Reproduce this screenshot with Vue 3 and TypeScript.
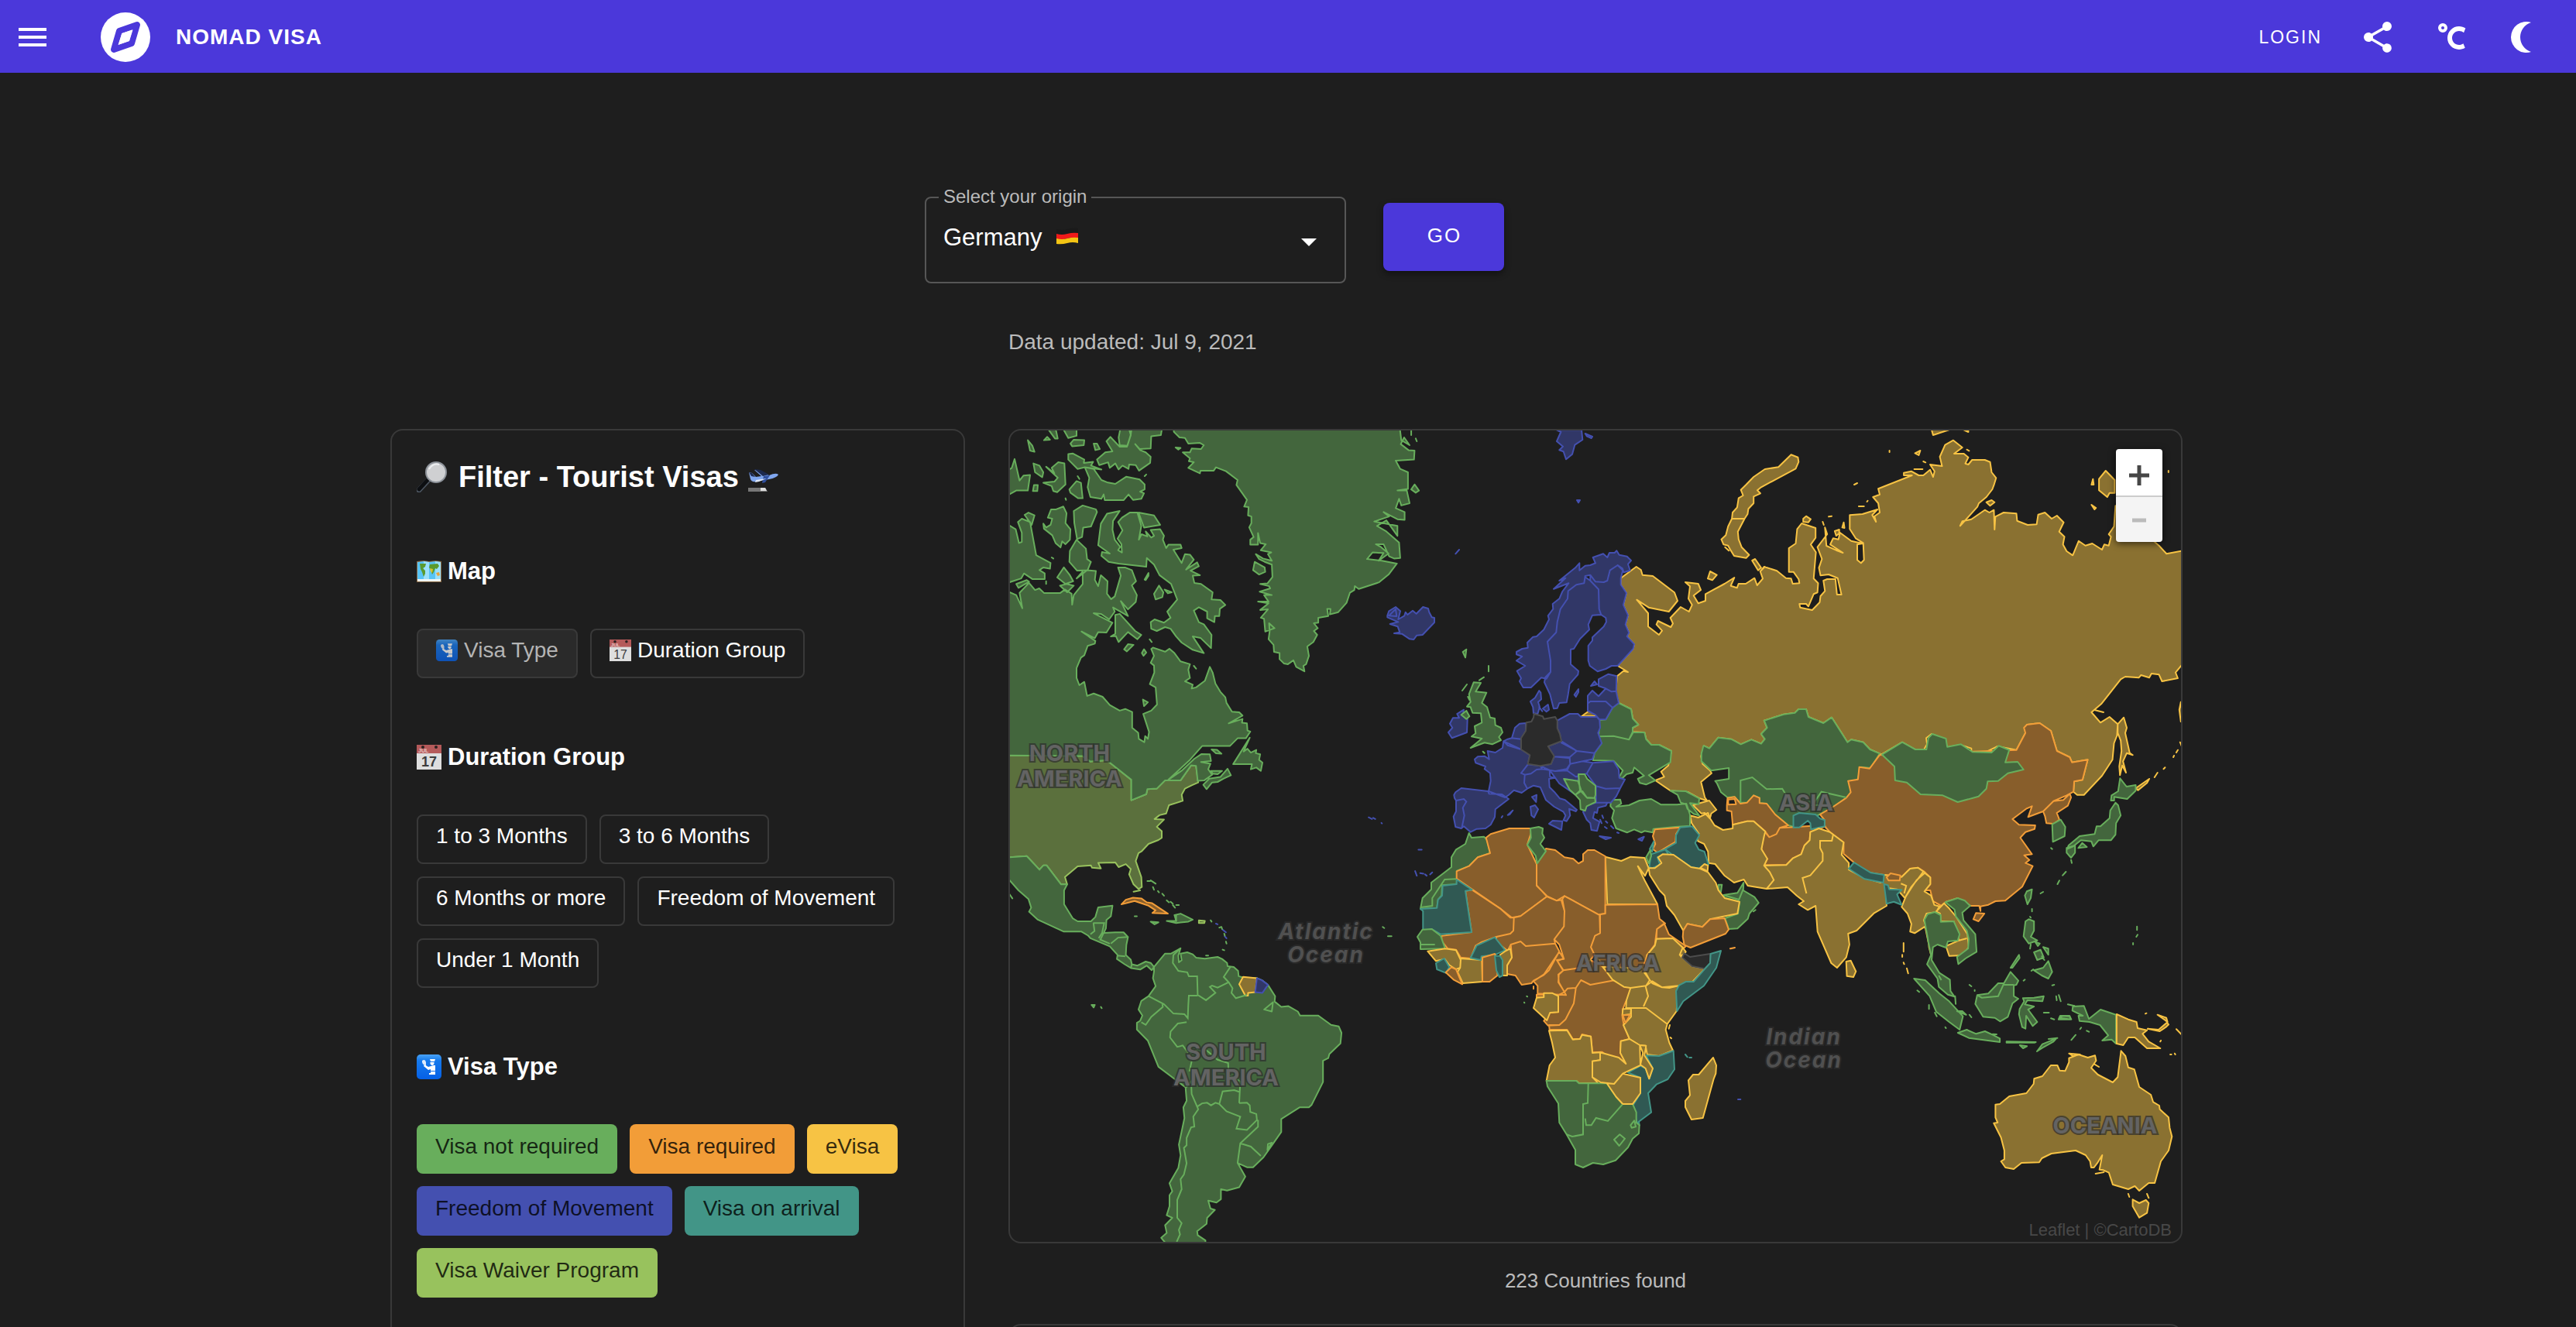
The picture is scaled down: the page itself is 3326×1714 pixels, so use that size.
<script setup lang="ts">
import { ref } from 'vue'

type Status = 'free' | 'required' | 'evisa' | 'movement' | 'arrival' | 'waiver' | 'none'

interface Area {
  status: Status
  rings: string
}

interface Label {
  x: number
  y: number
  lines: string[]
  ocean?: boolean
}

/* Coastlines are digitised on seven overlapping sheets: [origin x, origin y, scale x, scale y]. */
const sheets: Record<string, [number, number, number, number]> = {
  A: [1290, 540, 2.8, 2.8],
  B: [1290, 1040, 2.8, 2.3264],
  C: [1780, 640, 3, 3],
  D: [1780, 1020, 3, 3],
  E: [2080, 540, 2.0632, 3],
  F: [2180, 940, 2.3758, 3],
  G: [2280, 1280, 2.8, 3],
}

function trace(source: string, closed: boolean): string {
  let sheet = sheets.A
  return source
    .split('/')
    .map((ring) => {
      const points: string[] = []
      for (const token of ring.trim().split(/\s+/)) {
        if (sheets[token]) {
          sheet = sheets[token]
          continue
        }
        const [x, y] = token.split(',').map(Number)
        points.push(`${(sheet[0] + x / sheet[2]).toFixed(1)} ${(sheet[1] + y / sheet[3]).toFixed(1)}`)
      }
      return `M${points.join('L')}${closed ? 'Z' : ''}`
    })
    .join('')
}

const areas: Area[] = [
  // Russia
  { status: 'evisa', rings: `C 938,320 998,276 1016,288 1022,308 1062,312 1146,376 1158,408 1124,450 1046,434 1000,404 1044,456 1044,508 1086,540 1098,524 1076,500 1082,486 1132,510 1140,496 1130,474 1170,432 1202,450 1214,424 1200,400 1206,352 1188,336 1238,342 1248,366 1220,388 1238,418 1266,408 1266,382 1340,342 1378,318 1364,350 1388,358 1394,342 1422,342 1456,320 1466,348 1488,322 1478,294 1496,276
    E 400,590 408,576 442,592 466,620 480,622 484,642 502,640 500,624 486,596 474,596 474,504 492,486 496,430 508,408 545,426 545,464 532,490 546,520 540,622 552,640 550,676 540,682 526,730 520,720 502,720 504,734 536,744 556,714 558,690 570,670 566,630 576,624 598,624 602,684 614,684 604,620 580,606 558,610 554,580 562,546 550,500 576,450 570,424 574,495 600,512 618,522 584,490 592,466 606,470 610,444 640,476 670,486 656,490 656,550 666,562 674,550 672,484 652,466 636,430 636,376 670,372 710,354 696,376 706,402 702,380 716,366 712,330 698,306 716,296 712,274 802,222 780,222 780,212 800,206 820,222 832,222 850,200 858,228 862,206 850,180 882,186 876,150 890,104 912,86 936,114 914,138 940,138 952,152 944,176 952,180 962,162 996,162 1010,170 1014,210 1026,232 1020,260 1016,276 1000,306 980,330 976,344 930,418 936,400 960,392 996,356 1008,366 1020,356 1022,432 1024,382 1046,366 1080,370 1082,398 1110,414 1134,412 1138,374 1156,366 1174,390 1188,378 1206,404 1194,440 1208,460 1204,490 1214,516 1230,532 1246,476 1264,494 1282,486 1308,510 1314,490 1326,494 1332,460 1326,450 1340,420 1344,340 1400,420 1460,494 1480,526 1524,514 1524,950 1504,986 1510,1008 1468,1020 1460,994 1440,990 1434,1006 1412,996 1406,1006 1370,1002 1358,1012 1306,1108 1280,1140 1304,1180 1328,1158 1350,1186 1348,1230 1340,1260 1336,1324 1308,1386 1260,1460 1242,1460 1232,1448 1234,1408 1256,1402 1270,1324 1228,1334 1222,1314 1188,1290 1172,1212 1142,1182 1108,1188 1104,1220 1080,1286 1030,1272 990,1300 960,1296 960,1280 930,1266 896,1276 888,1244 854,1224 840,1240 842,1264 834,1284 810,1284 776,1256 720,1304 716,1300 690,1284 672,1256 640,1246 630,1256 588,1160 566,1182 526,1158 520,1128 500,1128 490,1142 460,1148 408,1172 416,1200 400,1224 410,1244 400,1262 374,1246 346,1264 320,1244 286,1238 262,1280 248,1270 240,1310 244,1340 264,1366 268,1376 240,1410 250,1470 262,1495
    C 1280,1186 1240,1172 1200,1150 1130,1144 1072,1104 1106,1090 1094,1070 1122,1046 1134,990 1086,966 1056,966 1036,944 1030,918 984,916 984,900 1006,888 984,864 978,828 930,804 918,760 924,700 948,680 966,684 926,660 986,594 990,576 962,546 970,532 956,500 966,464 948,424 960,378 938,346
    / C 786,856 816,834 840,838 840,854
    / E 480,142 498,152 500,170 492,196 400,268 390,280 398,292 380,304 380,330 366,352 364,372 356,390 338,440 340,470 348,500 368,530 360,542 328,534 318,510 312,494 300,490 294,470 306,454 312,420 322,390 324,366 336,346 340,310 352,300 346,278 360,258 380,228 410,198 446,190
    / 258,622 264,594 282,608 270,628 / 376,552 384,546 400,580 392,590 / 512,390 520,380 532,392 526,404 512,402 / 1000,326 1014,318 1022,326 1010,340 / 854,44 900,46 858,66 / 940,46 952,46 952,54 / 1300,236 1318,204 1342,240 1342,290 1328,290 1322,306 1300,280 / 1280,258 1284,236 1286,258 / 1280,336 1292,348 1288,354 / 810,136 824,126 820,144 / 648,258 656,252 / 808,198 830,198 / 596,438 608,432 608,446 600,456 / 616,424 620,404 622,426
    / 564,402 567,414 / 948,122 954,127 / 832,168 838,172 / 580,382 588,380 / 660,342 674,342 / 684,320 682,324 / 742,126 742,132 / 1485,204 1485,210
    / 1350,1186 1366,1160 1374,1200 1370,1220 1382,1298 1390,1306 1374,1298 1364,1330 1372,1374 1362,1346 1356,1384 1354,1350 1360,1290 1358,1250 1350,1220 / 1518,1100 1514,1130 1518,1176 1524,1176 / 1516,1256 1520,1270 / 1510,1286 1506,1296 / 1500,1308 1498,1314 / 1476,1354 1472,1360 / 1456,1374 1448,1392 / 1434,1398 1398,1434 1404,1442 1428,1414 / 1290,1132 1312,1140 / 304,500 314,514` },
  // Kazakhstan, Uzbekistan, Kyrgyzstan
  { status: 'free', rings: `E 248,1270 262,1280 286,1238 320,1244 346,1264 374,1246 400,1262 410,1244 400,1224 416,1200 408,1172 460,1148 490,1142 500,1128 520,1128 526,1158 566,1182 588,1160 630,1256 640,1246 672,1256 690,1284 716,1300 692,1356 666,1352 656,1404 634,1408 640,1450 F 484,272 452,300 430,318 325,385 306,378 266,336 240,294 218,292 218,272 200,262 180,290 160,290 150,280 142,268 120,270 100,250 88,216 82,206 124,198 124,156 70,166 40,130 40,100 46,70` },
  // China
  { status: 'required', rings: `E 1080,1286 1104,1220 1100,1200 1108,1188 1142,1182 1172,1212 1188,1290 1222,1314 1228,1334 1270,1324 1256,1402 1234,1408 1232,1448 F 1160,262 1120,284 1088,324 1042,346 1054,304 1036,314 994,354 1014,376 1064,378 1062,392 1034,404 1018,426 1054,490 1030,494 1046,512 1034,524 1056,536 1024,616 972,670 942,672 920,686 896,692 896,710 892,690 866,690 852,680 826,660 790,674 776,690 750,672 742,630 724,630 742,606 742,580 722,556 704,542 680,546 654,578 600,570 550,560 508,522 476,488 476,444 434,404 418,382 418,358 404,336 444,306 484,272 498,250 490,206 520,200 524,152 556,158 586,106
    / 874,742 882,718 908,720 890,750 / 1088,324 1120,284 1150,280 1170,256 1174,270 1164,302 1130,330 1138,356 1120,372 1098,370 1094,344` },
  // Mongolia, Korea, Japan, Taiwan
  { status: 'free', rings: `F 594,104 656,56 696,84 730,84 736,40 748,24 790,42 794,74 836,64 872,94 930,96 952,70 984,86 972,134 1010,132 1028,162 980,176 950,206 918,208 914,236 890,266 826,288 780,262 712,258 670,212 634,204 632,150
    / 1116,374 1142,356 1156,384 1154,420 1118,442 / 1324,196 1344,228 1372,222 1372,244 1346,276 1306,268 1306,282 1296,282 1298,262 1318,246 / 1310,290 1318,300 1326,340 1312,370 1310,414 1296,436 1258,436 1242,460 1236,440 1204,436 1180,460 1162,470 1166,456 1200,420 1246,412 1252,382 1264,382 1292,350 1294,320 / 1160,466 1186,456 1186,484 1174,504 1160,484 / 1196,466 1208,446 1222,462 / 1032,650 1038,634 1054,626 1050,660 1040,684 / 1174,512 1176,524 / 1158,558 1148,572 / 1138,592 1132,606 / 1088,636 1080,642 / 1112,466 1116,470 / 1376,770 1376,784 / 1378,802 1374,810 / 1364,834 1364,840` },
  { status: 'required', rings: `F 118,300 120,272 142,268 160,294 180,290 200,262 218,272 218,292 240,294 266,336 306,378 280,388 270,412 248,424 236,402 200,362 180,362 136,376 132,324 118,320 / 232,400 248,424 270,412 280,388 325,385 378,380 420,382 400,392 374,404 372,436 356,456 346,490 320,506 300,532 232,532 242,508 230,500 224,470 / 128,856 142,852 / D 1364,616 1380,612` },
  { status: 'arrival', rings: `F 322,340 340,330 390,336 404,352 418,358 418,382 376,394 374,370 366,360 340,386 322,386` },
  // Iran, India, Myanmar, Laos
  { status: 'evisa', rings: `F 5,340 30,348 60,330 66,350 80,378 106,396 136,390 136,376 180,362 200,362 236,402 232,420 224,470 242,508 232,534 250,560 262,590 240,624 182,612 170,588 140,600 110,572 82,528 62,524 60,480 48,450 30,440 22,420 32,410 10,370
    / 14,300 40,290 64,282 86,318 70,332 66,352 50,330 40,332
    / 232,534 300,532 320,506 346,490 356,456 372,436 374,404 400,390 434,404 476,444 470,492 492,524 492,550 540,582 590,600 600,570 654,578 680,546 704,542 726,562 700,590 684,620 664,660 640,626 606,620 608,690 570,718 516,786 490,798 494,840 484,890 456,930 438,912 396,790 390,690 366,706 338,684 354,672 332,650 304,618 240,624 262,590 250,560
    / 654,694 668,650 684,616 704,586 720,558 742,580 742,606 724,634 744,650 754,686 770,692 760,714 730,720 722,746 736,790 738,850 744,880 726,770 694,796 680,790 684,760 672,720
    / 760,712 784,680 800,700 820,730 856,800 860,850 840,882 800,884 790,846 830,824 814,750 774,750 772,720 / 484,906 498,902 514,944 506,966 486,962 / 660,834 660,868 / 656,880 656,888 / 660,910 662,916 / 670,932 674,952` },
  { status: 'arrival', rings: `F 492,546 508,522 560,562 600,570 598,600 540,586 / 600,606 612,610 616,626 654,628 640,646 654,686 630,674 608,682` },
  { status: 'required', rings: `F 608,580 620,564 650,572 648,592 614,592` },
  // South-east Asia
  { status: 'free', rings: `F 724,744 734,722 756,714 774,726 774,752 814,750 832,800 826,824 796,828 790,852 764,840 750,850 746,900 770,950 802,976 804,1020 816,1042 796,1034 768,1004 764,972 732,916 744,880 736,830 732,800
    / 788,676 826,660 848,670 864,690 840,716 844,746 880,800 884,868 850,894 828,916 824,888 858,856 860,820 854,786 820,730 816,704
    / 692,972 726,978 770,1030 800,1060 842,1118 832,1170 800,1140 760,1100 740,1040 / 824,1098 840,1098 852,1112 / 880,1070 886,1036 920,1030 950,990 968,990 988,946 1012,980 1006,996 998,998 998,1040 1012,1050 994,1068 980,1120 956,1138 940,1124 904,1120
    / 1014,1110 1016,1090 1030,1060 1026,1048 1060,1046 1090,1040 1086,1060 1040,1056 1032,1072 1060,1080 1042,1092 1070,1140 1056,1156 1036,1116 1034,1166 1024,1160
    / 1028,808 1034,750 1044,742 1060,750 1060,786 1050,810 1070,824 1044,836 / 1050,840 1048,856 / 1060,870 1080,860 1090,890 1070,900 / 1088,850 1104,856 1104,880 / 1064,830 1078,836 1072,846 / 1084,886 1092,900 / 1060,940 1088,930 1104,904 1116,946 1104,972 1084,960 / 988,930 1014,880 1016,892 994,930 / 1054,702 1054,712 / 1048,732 1050,736 / 1028,980 1032,976 / 1052,942 1058,936 / 702,1018 708,1024 / 738,1074 738,1090 / 756,1104 762,1118 / 788,1160 790,1164 / 862,996 868,1002 / 878,1016 878,1020 / 862,1112 868,1122 / 818,1040 820,1070
    / 1128,1040 1130,1056 / 1136,1036 1142,1060 / 1116,998 1122,996 / 1140,1124 1148,1116 1170,1118 1172,1130 / 1090,1104 1106,1104 / 1112,1126 1122,1130 / 1164,1072 1184,1078
    / G 694,162 726,150 760,166 792,156 820,170 846,184 846,198 734,182 / 820,167 834,168 / 870,196 976,198 972,200 870,200 / 980,234 1000,206 1050,184 1040,196 1000,220 / 918,210 944,214 930,222 / 1022,186 1054,182 / 1110,60 1150,58 1168,108 1210,72 1266,92 1266,204 1250,188 1216,192 1238,172 1208,132 1170,120 1134,116 1130,96 1146,96 1108,76 / 1104,190 1120,170 / 1160,154 1168,158 / 1136,148 1140,142 / 1058,110 1064,96 1098,96 1104,110` },
  // Oceania
  { status: 'evisa', rings: `G 1268,90 1310,110 1340,120 1344,144 1378,152 1362,166 1384,196 1426,222 1378,222 1334,180 1310,180 1292,210 1268,204 / 1380,146 1420,150 1450,122 1456,130 1446,140 1424,156 / 1416,92 1448,104 1452,120 / 1484,148 1504,170 / 1372,88 1376,86 / 1462,246 1466,246 / 1478,242 1480,246 / 1426,196 1428,192
    / 830,440 846,438 880,408 942,396 968,360 970,340 1000,330 1030,288 1054,288 1062,308 1082,310 1096,276 1096,260 1130,246 1164,258 1190,250 1194,270 1176,298 1200,324 1254,354 1272,334 1284,232 1300,252 1310,296 1332,304 1350,372 1392,402 1400,430 1422,444 1424,458 1456,490 1460,530 1468,564 1456,618 1428,660 1406,744 1384,744 1350,774 1334,756 1310,768 1254,750 1240,704 1220,694 1206,692 1216,636 1200,664 1186,684 1176,684 1172,660 1156,636 1120,618 1032,630 998,648 988,664 924,666 896,690 866,684 850,660 862,652 862,618 850,568 824,512 838,510 830,490
    / 1096,242 1136,246 1110,252 / 1188,284 1204,294 / 1326,808 1350,822 1374,810 1384,822 1378,860 1350,878 1326,834 / 1192,708 1222,702 / 1310,786 1314,798 / 1378,786 1384,802` },
  // Turkey, Caucasus, Belarus, Ukraine
  { status: 'free', rings: `C 1130,1144 1190,1146 1242,1174 1240,1196 1206,1192 1242,1240 1220,1234 1196,1214 1190,1196 1170,1190 1158,1160
    / 900,1180 936,1178 940,1194 920,1206 970,1200 1010,1182 1056,1176 1094,1198 1156,1198 1192,1194 1206,1236 1206,1280 1150,1284 1064,1292 1062,1306 1030,1300 1018,1306 990,1294 962,1306 920,1290 904,1250 912,1220 898,1204
    / 906,822 930,804 978,828 984,864 1006,888 984,900 984,916 970,946 910,932 852,934 856,870 880,868
    / 852,934 910,932 970,946 986,918 1030,918 1036,944 1056,966 1086,966 1134,990 1130,1034 1100,1052 1046,1084 1072,1104 1036,1120 1012,1114 1004,1098 1028,1086 990,1054 984,1074 960,1080 944,1096 930,1094 946,1066 910,1028 830,1026 836,998 864,960` },
  // Levant and Arabian peninsula
  { status: 'required', rings: `C 1070,1294 1120,1290 1168,1286 1152,1312 1150,1342 1080,1384 1062,1370 1072,1350 1062,1320` },
  { status: 'arrival', rings: `D 1168,146 1214,142 1242,176 1226,206 1240,232 1262,240 1278,290 1246,306 1212,300 1140,254 1110,230 1152,206 1152,176 / 1048,300 1056,250 1110,232 1122,250 1080,262 1090,290 1060,304 / 1050,230 1066,200 1060,240` },
  { status: 'free', rings: `D 1036,262 1052,234 1056,256 1046,286 / 1340,420 1336,408 1390,400 1414,360 1412,390 1456,416 1472,438 1436,480 1430,500 1390,538 1356,540 1342,498 1392,480 1398,434 / 1316,388 1316,368 1330,368 1326,396 / 1452,472 1460,466` },
  { status: 'evisa', rings: `D 1046,304 1070,304 1096,284 1082,262 1100,250 1142,252 1210,300 1246,306 1276,320 1306,360 1316,390 1340,420 1398,434 1390,480 1284,502 1254,532 1196,520 1180,546 1146,486 1116,450 1108,410 1088,390 1050,330 / 1246,302 1262,288 1276,294 1274,316
    / 878,260 940,276 976,260 1030,264 1046,304 1032,334 1004,296 1030,350 1062,410 1080,444 886,444` },
  { status: 'required', rings: `D 1180,546 1196,520 1254,532 1284,502 1340,498 1356,542 1344,558 1208,612 1184,602 1178,570` },
  // Schengen area
  { status: 'movement', rings: `C 34,465 40,448 66,432 84,448 76,480 100,466 104,452 112,462 132,446 146,458 172,432 192,438 196,452 206,472 216,474 216,492 170,540 148,542 136,558 120,556 90,536 60,534 82,530 74,508 44,498 76,490 34,472 / 40,466 66,440 70,468
    / 534,606 556,594 578,590 576,570 598,548 612,546 640,520 660,480 656,466 676,440 674,420 700,400 712,372 736,340 678,362 724,320 700,330 762,280 778,262 778,290 800,272 820,270 840,262 830,240 870,226 886,240 894,222 914,222 922,214 932,230 962,236 978,252 966,266 974,290 950,298 944,282 926,270 896,290 886,330 872,336 840,334 820,308 800,312 796,340 766,346 734,370 732,400 704,440 692,490 688,530 654,566 666,640 666,684 650,710 630,706 590,744 560,744 546,720 552,708 536,680 568,660 534,640 556,624 534,616
    / 654,566 688,530 692,490 704,440 732,400 734,370 766,346 796,340 800,316 820,330 852,364 854,440 862,462 828,464 812,500 816,520 780,556 756,594 744,596 744,654 774,680 772,694 740,730 734,770 728,802 700,804 692,824 678,826 664,770 642,724 646,704 666,684 666,640
    / 820,308 840,334 872,336 886,330 896,290 926,270 946,290 938,320 938,346 960,378 948,424 966,464 956,500 970,532 962,546 990,576 986,594 926,660 902,660 880,672 848,682 818,660 812,640 812,582 828,562 828,550 872,508 882,490 880,474 862,462 854,440 852,364 820,330
    / 588,798 606,784 622,756 628,764 630,790 618,800 624,820 616,846 600,844 598,820 / 636,826 656,810 660,830 650,838 / 622,820 634,836 / 852,712 890,692 922,700 920,758 902,760 880,748 852,738 / 810,776 828,756 852,778 880,748 902,760 920,758 930,804 906,822 880,798 820,798 810,806 / 810,806 820,798 880,798 906,822 880,868 856,868 840,850 810,834 / 822,738 836,720 846,732 / 758,772 774,750 774,762 764,780
    / 692,872 740,846 772,846 784,858 846,858 856,870 858,900 850,920 864,960 836,998 800,994 768,990 708,958 702,924 692,902
    / 516,940 528,900 546,884 570,882 570,912 552,944 / 484,952 500,944 516,940 552,944 552,984 500,968
    / 372,1022 384,1012 410,1010 428,1022 422,990 452,996 480,978 484,952 552,984 586,1006 578,1042 552,1076 566,1082 564,1114 576,1136 554,1152 524,1142 504,1160 490,1170 426,1146 434,1106 432,1076 410,1060 414,1050 376,1036
    / 292,1160 298,1150 320,1134 424,1146 428,1156 478,1158 504,1176 452,1216 450,1246 434,1276 414,1290 380,1292 356,1304 330,1282 320,1290 298,1284 290,1244 300,1224 300,1182 294,1172
    / 566,1082 590,1078 612,1062 634,1060 662,1064 664,1090 684,1094 660,1098 662,1130 680,1148 702,1174 722,1180 768,1218 764,1224 738,1214 742,1240 728,1262 716,1258 724,1240 716,1226 680,1206 648,1180 626,1130 600,1124 576,1136 564,1114
    / 660,1272 674,1260 712,1262 708,1296 / 588,1206 606,1200 618,1216 602,1248 592,1240 / 594,1168 612,1160 610,1188 / 552,1076 578,1042 626,1048 634,1060 612,1062 590,1078 566,1082 / 626,1048 668,1040 680,1012 740,1018 742,1040 728,1060 684,1068 662,1064 / 656,972 708,952 768,990 740,1014 680,1012 / 740,1014 768,990 836,998 828,1022 790,1030 742,1040 / 742,1040 790,1030 830,1036 806,1078 764,1090 730,1066
    / 662,1064 684,1068 730,1066 764,1090 776,1090 772,1106 718,1098 740,1140 764,1160 700,1116 684,1094 / 830,1036 910,1030 930,1062 932,1094 954,1100 936,1134 880,1136 842,1126 820,1096 806,1078 / 842,1126 880,1136 936,1134 920,1166 900,1190 842,1190
    / 792,1226 804,1200 842,1190 886,1190 880,1202 850,1210 846,1230 836,1226 830,1250 856,1264 846,1300 824,1296 820,1270 806,1256 / 856,1320 900,1326 880,1332 / 1006,1332 1028,1322 1020,1338 / 866,1240 870,1250 / 880,1262 886,1268 / 876,1284 884,1290 / 900,1280 910,1290 / 858,1256 864,1270 / 924,1306 930,1308 / 500,1238 520,1220 508,1236 / 476,1248 480,1242
    / 270,918 286,900 276,884 288,862 312,862 304,846 330,830 326,854 344,866 342,918 284,940 / 298,226 312,210 / 768,18 780,18 774,28 / 690,-254 706,-246 690,-210 714,-190 700,-176 716,-170 726,-140 750,-160 760,-196 790,-216 786,-254 / 800,-240 828,-228 824,-222 806,-230
    / A 1336,1444 1348,1450 / 1352,1446 1360,1450 / 1382,1464 1384,1466 / B 1516,134 1528,134 / 1504,198 1510,212 / 1522,204 1534,206 / 1540,208 1546,212 / 1558,208 1566,202 / B 932,520 950,526 972,540 952,564 926,562 / 784,356 790,358 / 808,374 820,382 / 816,394 822,400 / D 1392,1200 1402,1200` },
  { status: 'none', rings: `C 572,880 592,876 600,860 602,846 636,856 640,866 684,858 692,872 692,902 702,924 708,952 656,972 680,1010 668,1040 626,1048 578,1040 586,1006 552,984 552,940 570,912` },
  // Balkans, United Kingdom
  { status: 'free', rings: `C 718,1098 772,1106 784,1140 762,1160 740,1140 / 774,1080 798,1080 808,1098 840,1124 840,1160 836,1172 808,1172 790,1146 780,1144 / 762,1160 784,1146 806,1170 838,1172 840,1188 806,1204 800,1222 782,1216 780,1180
    / 368,724 396,726 376,760 418,764 400,804 420,820 432,860 450,864 452,890 474,900 480,918 466,936 474,948 440,964 410,958 356,978 400,942 360,934 376,922 372,894 400,880 396,844 364,842 356,820 342,818 356,800 350,770 / 320,850 340,834 352,856 340,866 / 324,756 342,732 / 346,780 352,792 / 390,716 408,704 / 426,682 426,660 / 326,606 340,596 336,628 / 404,992 410,998` },
  // North Africa
  { status: 'free', rings: `D 350,168 360,186 408,182 420,194 432,246 384,262 350,296 304,314 302,366 246,370 244,410 230,426 226,458 162,462 170,420 204,386 204,360 282,300 282,262 300,232 336,210 / 16,532 22,536 / 36,568 50,568 / 574,800 576,802 / 564,824 565,826` },
  { status: 'required', rings: `D 416,186 434,172 506,150 596,150 576,212 612,288 612,370 652,414 550,490 516,496 470,460 362,386 302,344 302,316 350,296 384,262 432,246
    / 648,228 684,234 720,262 754,268 774,286 792,276 792,250 810,234 836,234 878,258 878,480 852,484 720,412 690,430 652,412 612,372 612,286` },
  { status: 'free', rings: `D 588,150 620,144 636,150 634,170 642,186 626,210 648,238 614,286 608,256 576,214 590,186` },
  { status: 'required', rings: `D 362,388 470,460 510,496 524,496 522,546 510,558 456,570 400,590 376,604 356,654 318,650 300,620 268,616 244,586 244,566 360,552 336,392
    / 652,414 690,430 712,426 720,470 718,530 680,580 684,596 570,606 550,588 512,600 500,624 456,590 456,570 510,558 522,546 524,496 550,490
    / 498,714 498,680 516,650 512,600 550,588 570,606 684,596 700,626 660,700 640,718 600,740 592,750 554,756 530,720
    / 708,430 720,412 852,484 858,484 858,556 838,566 822,610 836,640 820,660 780,690 714,700 690,660 718,656 700,600 680,580 718,530 720,470
    / 600,742 640,716 700,628 716,654 692,664 716,700 696,716 698,746 726,796 616,790 616,760
    / 716,700 780,690 820,660 866,684 916,738 820,756 784,738 764,768 732,770 720,784 696,746 698,716
    / 878,446 1080,444 1088,500 1110,518 1078,540 1070,600 1040,640 1024,690 880,690 836,640 822,610 838,566 858,556 856,484 878,480 / 1078,540 1106,518 1124,560 1190,606 1182,614 1130,576 1076,578
    / 764,768 784,738 820,756 916,738 946,756 976,768 980,790 958,820 946,850 944,880 950,912 972,966 938,974 936,1020 956,1046 960,1062 930,1038 888,1034 866,1016 828,1018 822,956 788,948 780,966 752,966 730,930 662,930 660,912 700,912 724,890 756,828
    / 720,784 732,770 764,768 756,828 724,890 700,912 656,914 640,896 664,864 696,860 696,796 / 612,794 640,794 640,804 612,804 / 600,762 600,772` },
  { status: 'arrival', rings: `D 302,348 362,388 336,392 360,552 240,560 206,540 172,548 172,470 162,462 226,458 230,426 246,410 248,372 302,366` },
  { status: 'free', rings: `D 150,570 170,542 206,540 240,566 258,616 162,618 162,592` },
  { status: 'evisa', rings: `D 190,626 258,616 300,622 318,660 316,690 300,696 274,680 256,656 222,664 / 318,654 400,660 402,744 326,750 306,706 316,690` },
  { status: 'arrival', rings: `D 222,672 254,654 274,688 260,710 226,696 / 356,652 380,604 450,572 490,622 450,640 398,646 396,660` },
  { status: 'required', rings: `D 260,708 282,688 300,696 324,754 290,736 / 402,650 450,636 460,660 460,720 430,744 402,744` },
  { status: 'evisa', rings: `D 470,640 490,626 510,616 516,650 498,680 498,720 480,720` },
  { status: 'arrival', rings: `D 450,644 470,644 480,660 480,720 468,726 456,700` },
  // East and southern Africa
  { status: 'evisa', rings: `D 868,686 960,690 1024,690 1050,738 1036,760 976,768 950,764 906,736
    / 1076,578 1140,576 1178,612 1166,640 1176,650 1214,684 1264,694 1216,744 1160,760 1126,768 1098,766 1060,750 1030,710 1040,640 1070,604 / 1166,640 1178,612 1190,628 1178,642
    / 976,768 1036,760 1060,742 1098,766 1160,760 1154,858 1118,908 1036,846 958,846 960,816
    / 978,846 1036,846 1118,908 1112,930 1126,980 1140,1010 1086,1032 1040,1026 1034,992 1010,990 972,966 948,912 978,880 / 946,850 978,848 976,870 944,874
    / 612,806 640,804 640,788 672,788 696,800 696,862 664,864 652,894 600,846
    / 660,934 730,932 752,968 780,966 788,950 822,956 828,1020 858,1018 858,1048 828,1052 828,1114 850,1136 776,1138 766,1128 650,1128 662,1068 684,1038 672,980
    / 1296,1038 1308,1068 1306,1100 1298,1120 1256,1272 1212,1278 1188,1230 1188,1206 1206,1184 1200,1126 1218,1104 1240,1104 1282,1054 / 1128,912 1124,926 / 1130,960 1134,964` },
  { status: 'required', rings: `D 946,874 974,872 956,904` },
  { status: 'none', rings: `D 1176,650 1184,634 1206,648 1284,636 1284,672 1264,694 1214,684` },
  { status: 'arrival', rings: `D 1156,858 1152,780 1164,758 1190,744 1220,744 1264,694 1284,672 1286,636 1326,624 1308,690 1260,760 1180,820 / 1188,1026 1196,1036 / 1204,1038 1212,1038
    / 1036,1030 1086,1032 1142,1012 1146,1084 1120,1122 1076,1142 1044,1176 1056,1250 1008,1286 1010,1300 998,1284 986,1222 1014,1176 1014,1116 966,1096 1014,1070 1034,1080 1048,1120 1062,1080` },
  { status: 'free', rings: `D 650,1128 766,1128 776,1138 884,1138 920,1190 946,1218 984,1218 998,1250 998,1290 1010,1300 1008,1332 984,1352 966,1386 918,1436 870,1452 830,1446 792,1464 762,1452 762,1396 728,1336 700,1290 696,1216 654,1150 / 912,1356 934,1336 954,1352 932,1380 / 976,1300 990,1282 996,1306 980,1310` },
  { status: 'evisa', rings: `D 858,1018 930,1038 958,1062 936,1020 938,974 972,966 1012,990 1014,1068 946,1100 912,1140 860,1134 828,1114 828,1052 858,1048 / 1012,990 1036,992 1030,1030 1062,1080 1048,1120 1034,1080 1014,1066 1024,1020 / 884,1138 912,1140 946,1100 1014,1116 1014,1176 984,1218 946,1218 920,1190` },
  // United States
  { status: 'waiver', rings: `A 30,1220 300,1222 330,1242 388,1238 400,1246 478,1308 478,1382 532,1360 536,1342 570,1340 600,1310 656,1310 694,1256 712,1258 720,1318 696,1328 672,1340 660,1362 664,1384 640,1392 614,1400 604,1430 580,1436 562,1450 596,1452 570,1478 588,1494 588,1518 576,1526 540,1540 516,1566 B 504,144 494,168 514,216 516,246 504,252 486,238 470,208 476,192 458,177 432,186 420,172 358,173 368,190 336,188 332,181 284,184 238,216 246,238 224,238 172,181 160,181 146,194 100,153 30,157 / 722,346 744,348 742,354 722,354 / 486,260 510,256` },
  // Canada
  { status: 'free', rings: `A 30,626 62,640 84,688 74,632 108,596 130,622 145,616 163,633 220,633 238,620 262,635 264,675 270,640 302,600 302,555 280,580 318,550 350,553 346,585 358,608 368,568 392,590 390,635 405,655 418,645 440,570 430,540 455,540 480,550 495,590 480,605 498,640 494,665 466,692 440,662 466,716 412,685 418,700 398,728 368,708 342,706 410,740 388,776 358,774 346,796 298,772 348,806 346,816 320,824 308,858 296,866 280,904 280,940 290,966 308,954 318,1005 342,996 374,1008 400,1038 436,1058 456,1052 481,1063 481,1120 503,1138 505,1160 525,1172 528,1150 538,1160 542,1135 521,1070 550,1058 571,1036 566,974 545,962 561,920 560,895 548,885 560,860 550,835 556,830 600,845 616,834 634,850 656,880 690,890 684,910 690,940 672,952 700,964 696,978 712,974 744,950 762,900 772,920 782,960 800,990 818,1010 822,1030 842,1062 868,1064 880,1076 830,1104 880,1088 878,1102 896,1104 898,1130 908,1134 892,1158 862,1158 834,1186 734,1186 690,1236 612,1308 660,1275 706,1232 732,1215 762,1216 766,1240 730,1244 764,1250 756,1270 770,1290 742,1310 718,1312 712,1258 694,1256 656,1310 600,1310 570,1340 536,1342 532,1360 478,1382 478,1308 400,1246 388,1238 330,1242 300,1222 30,1220
    / 738,1326 760,1304 800,1298 826,1268 838,1292 812,1304 790,1316 770,1318 750,1342 / 766,1276 806,1276 790,1288 772,1286 / 768,1198 788,1200 804,1214 784,1212 / 906,1156 884,1206 898,1196 910,1210 930,1200 928,1212 944,1216 940,1236 952,1246 946,1276 930,1264 910,1270 914,1252 846,1252
    / 30,384 60,402 72,452 82,448 82,415 68,376 82,364 112,376 134,496 186,524 184,545 160,540 146,550 165,562 165,582 120,582 90,562 80,580 30,596 / 92,350 106,342 128,352 118,386 / 62,600 100,586 108,592 70,614
    / 160,382 162,400 192,424 204,452 222,468 228,446 240,456 256,440 258,402 240,380 244,344 232,320 206,330 188,330 176,360 192,364 186,386 170,396 / 270,336 302,316 350,330 354,340 332,392 304,396 300,430 282,438 272,380 / 256,480 280,440 314,472 318,510 332,520 320,550 282,552 254,520 / 210,576 234,540 256,568 268,590 240,600 / 220,606 244,600 270,606 246,630
    / 358,460 368,382 390,346 436,336 412,372 410,404 418,440 438,466 430,478 444,486 442,456 428,436 446,406 430,376 444,360 472,342 500,342 514,390 505,440 515,420 536,428 530,410 550,432 560,426 548,405 582,402 596,426 592,440 604,470 612,458 656,458 660,470 630,476 660,524 672,492 690,494 704,512 676,548 716,522 722,536 692,552 726,568 700,570 706,596 730,600 772,630 768,656 800,658 818,676 798,690 796,716 780,716 778,738 752,724 752,700 722,684 704,696 722,738 740,746 768,784 766,832 728,795 700,790 740,850 700,838 660,812 640,790 620,762 600,756 570,770 550,762 548,738 562,728 596,740 620,722 608,700 644,656 622,600 580,568 560,530 534,506 532,538 432,526 396,520 370,498 372,484 400,490
    / 504,342 560,352 582,386 524,396 / 420,712 436,708 492,770 514,784 500,800 466,774 432,810 422,788 404,790 420,780 / 452,836 466,818 486,820 462,844 / 516,850 524,836 532,848 522,860 / 560,636 578,606 594,630 590,648 566,656 / 526,584 540,560 540,570 530,586 / 598,620 624,630 610,634 / 520,1018 538,1028 524,1042 / 544,800 552,810 / 704,896 712,906
    / 310,178 342,184 370,224 390,232 420,238 460,212 508,222 526,240 526,258 510,266 524,272 514,292 484,296 468,276 450,297 382,297 378,276 370,292 330,286 320,250 326,216
    / 590,30 585,62 550,66 548,110 508,112 492,94 510,116 530,124 548,140 546,162 506,190 494,170 470,168 468,184 446,172 432,186 420,164 400,180 394,160 362,170 354,150 384,124 410,120 388,84 402,68 436,104 462,104 476,62 470,40 / 432,70 440,30 480,30 476,60 464,100 436,98
    / 250,130 266,128 308,150 306,162 340,158 332,172 370,186 310,178 284,184 250,150 / 254,258 280,228 296,234 302,290 286,290 258,270 / 160,234 200,230 212,216 170,176 200,200 190,180 214,160 236,164 240,240 210,268 196,264 190,246 / 124,164 146,172 160,196 156,214 130,196 / 30,190 46,180 56,148 74,226 88,208 112,206 104,262 62,262 30,280 / 122,264 126,242 140,242 138,264 / 258,92 270,78 308,80 306,98 264,102 / 342,92 354,92 364,112 348,116 / 104,80 120,100 128,122 112,118 / 170,30 200,40 206,46 212,74 202,74 / 232,40 280,30 280,64 250,72 / 162,80 174,68 184,78 / 526,210 532,204 / 284,210 290,220 / 240,290 242,296 / 170,590 170,600 / 190,504 196,508` },
  // Greenland
  { status: 'free', rings: `A 630,30 632,50 652,70 672,72 684,92 726,90 740,98 730,112 696,110 690,124 664,124 690,146 686,156 704,160 684,180 726,200 728,190 776,190 784,178 820,192 862,224 858,242 896,296 886,320 902,322 900,352 912,356 912,380 904,395 920,430 908,440 908,458 936,458 936,416 944,452 964,456 946,478 984,486 972,492 986,516 954,508 928,492 940,510 960,520 986,530 988,575 970,598 944,600 976,608 980,616 942,628 986,640 958,640 974,664 936,664 974,670 944,694 972,692 946,722 958,726 962,772 996,760 976,742 978,772 974,800 992,820 994,846 1014,850 1014,872 1030,888 1044,890 1064,876 1074,900 1104,916 1100,896 1110,890 1120,860 1114,826 1136,810 1150,784 1138,770 1152,760 1138,742 1154,740 1154,722 1190,716 1186,690 1198,690 1196,710 1226,702 1256,668 1268,632 1284,622 1286,608 1300,618 1374,594 1408,566 1438,526 1384,516 1330,510 1350,486 1390,488 1372,516 1408,490 1380,466 1362,456 1390,456 1410,500 1428,508 1450,506 1446,450 1400,410 1366,390 1400,370 1440,426 1440,390 1356,374 1410,356 1390,340 1440,366 1466,368 1466,340 1434,326 1446,292 1454,316 1484,308 1474,262 1440,262 1478,256 1478,196 1450,184 1434,154 1500,150 1502,118 1480,116 1452,94 1464,70 1484,98 1454,80 1448,30 / 1490,258 1502,240 1518,262 1506,270 / 918,550 924,520 960,540 962,556 940,566 / 638,106 656,108 648,114 / 1506,74 1510,84 / 1490,40 1490,62` },
  // Mexico, Central and South America
  { status: 'free', rings: `B 30,157 100,153 146,194 160,181 172,181 224,238 246,238 235,256 235,298 266,340 284,349 332,349 348,336 358,307 410,302 404,334 388,345 386,370 378,384 420,382 450,382 466,396 460,420 458,450 476,464 480,478 500,482 530,470 548,474 560,486 552,496 534,482 510,494 478,490 454,478 426,462 428,450 400,424 330,400 322,392 298,380 234,380 140,344 108,320 116,308 106,282 70,256 30,218
    / 606,348 640,348 634,330 656,326 700,344 684,350 640,354 / 548,350 576,352 562,358 / 548,226 566,236 / 556,246 560,254 / 536,228 546,228 / 574,258 578,262 / 590,266 596,272 / 606,286 614,292 / 620,290 628,296 / 640,300 650,300 / 628,300 636,308 / 765,346 768,350 / 796,368 802,366 / 804,366 806,372 / 814,386 816,392 / 820,410 822,416 / 808,434 814,436 / 748,452 756,452 / 334,600 346,600 342,608 / 368,606 371,610 / 490,334 498,334 / 38,268 48,280
    / 560,486 600,446 622,446 656,430 648,452 650,472 660,466 656,446 680,442 700,448 712,458 744,461 790,456 806,462 824,474 826,484 848,486 864,498 866,514 884,518 932,520 950,526 972,540 998,574 996,590 1020,606 1046,604 1080,620 1088,632 1154,632 1200,660 1228,665 1238,684 1234,716 1194,748 1190,760 1171,768 1171,832 1130,900 1120,908 1086,908 1020,943 1020,982 988,1020 956,1058 918,1088 896,1088 862,1075 890,1116 868,1148 824,1158 802,1154 802,1184 786,1194 756,1188 764,1212 780,1216 752,1240 750,1258 716,1280 718,1292 746,1308 746,1320 606,1320 586,1300 606,1285 600,1262 626,1240 606,1232 616,1205 616,1172 626,1160 616,1136 648,1090 656,1052 650,1020 670,940 666,908 678,888 674,848 630,820 576,786 538,708 498,674 498,654 510,648 518,632 504,614 514,588 540,574 566,544 556,520 560,500
    / 958,614 990,592 986,620 / 972,1018 986,1014 970,1036` },
  { status: 'required', rings: `B 442,298 458,284 484,278 514,280 534,292 552,294 610,326 554,324 566,316 540,302 490,288` },
  { status: 'evisa', rings: `B 868,538 882,516 932,520 926,562 900,564 900,572 890,572` },
  { status: 'movement', rings: `B 932,520 950,526 972,540 952,564 926,562` },
]

/* Inland borders between countries of the same status. */
const borders: Area[] = [
  { status: 'free', rings: `B 340,354 380,354 372,384 360,400 / 378,384 366,404 400,416 / 404,416 430,398 464,396 / 426,452 456,454 / 480,478 476,490 / 330,388 345,378 341,354 / 640,328 640,350
    / 656,430 630,450 628,474 648,498 680,502 686,514 716,514 718,570 748,586 782,564 762,546 770,542 790,548 830,532 812,516 836,486 / 830,532 844,550 840,564 856,580 896,570 / 718,572 686,572 684,600 682,640 670,628 630,626 596,598 540,574 / 514,652 530,660 550,636 592,606 590,598 / 678,652 646,656 620,680 618,698 644,726 664,722 684,744 / 690,745 720,735 / 748,735 790,765 828,775 830,810 872,830 868,895 / 696,770 688,800 / 676,848 694,830 696,868 716,906 734,896 752,894 766,902 782,894 796,898 808,860 850,856 870,862 / 796,898 822,920 872,936 858,972 896,976 932,946 930,928 908,922 906,902 896,894 868,895 / 936,946 936,966 872,1016 862,1075 / 872,1016 910,1026 946,1054 / 716,906 720,914 702,936 706,966 694,968 678,1000 678,1022 668,1030 678,1076 668,1110 656,1124 660,1154 644,1186 644,1240 660,1256 650,1276 654,1290 642,1312
    / D 300,346 256,348 208,420 208,450 162,456 / 162,600 218,600 / 812,1140 810,1214 792,1218 792,1336 750,1344 728,1336 / 800,1274 804,1300 824,1300 842,1272 888,1284 944,1220 / 1336,408 1396,426 1412,386
    / F 160,290 160,204 196,192 240,238 288,236 300,262 / 484,270 408,248 380,300 440,300 / 886,1036 900,1046 950,1040 966,996 998,996 / 768,960 776,978` },
  { status: 'movement', rings: `C 300,1182 330,1176 340,1186 326,1210 332,1240 322,1290` },
  { status: 'evisa', rings: `F 362,642 350,582 374,572 412,516 412,486 404,466 404,438 440,438 444,414 / 830,824 854,816 / 662,642 668,612 652,604 / D 1034,762 1044,800 1026,840 / E 322,390 356,390` },
]

const labels: Label[] = [
  { x: 1381, y: 983, lines: ['NORTH', 'AMERICA'] },
  { x: 1583, y: 1369, lines: ['SOUTH', 'AMERICA'] },
  { x: 2089, y: 1254, lines: ['AFRICA'] },
  { x: 2332, y: 1047, lines: ['ASIA'] },
  { x: 2718, y: 1464, lines: ['OCEANIA'] },
  { x: 1712, y: 1213, lines: ['Atlantic', 'Ocean'], ocean: true },
  { x: 2329, y: 1349, lines: ['Indian', 'Ocean'], ocean: true },
]

const land = areas.map((area) => ({ status: area.status, d: trace(area.rings, true) }))
const inner = borders.map((area) => ({ status: area.status, d: trace(area.rings, false) }))

const origin = ref('Germany')
const mapMode = ref<'visa' | 'duration'>('visa')
const durations = ['1 to 3 Months', '3 to 6 Months', '6 Months or more', 'Freedom of Movement', 'Under 1 Month']
const visaTypes: { name: string; status: Status }[] = [
  { name: 'Visa not required', status: 'free' },
  { name: 'Visa required', status: 'required' },
  { name: 'eVisa', status: 'evisa' },
  { name: 'Freedom of Movement', status: 'movement' },
  { name: 'Visa on arrival', status: 'arrival' },
  { name: 'Visa Waiver Program', status: 'waiver' },
]
</script>

<template>
  <div class="app">
    <svg class="defs" width="0" height="0" aria-hidden="true">
      <defs>
        <linearGradient id="blueTile" x1="0" y1="0" x2="0" y2="1">
          <stop offset="0" stop-color="#4aa3f5" />
          <stop offset="0.25" stop-color="#1579ec" />
          <stop offset="1" stop-color="#0560e6" />
        </linearGradient>
        <symbol id="calendar" viewBox="0 0 32 32">
          <rect width="32" height="32" fill="#dedede" />
          <rect width="32" height="11" fill="#b55a5a" />
          <circle cx="8" cy="3" r="2" fill="#2c2020" />
          <circle cx="25" cy="3" r="2" fill="#2c2020" />
          <text x="2" y="10" font-size="7" fill="#e8c9c9" font-family="Liberation Sans, sans-serif" font-weight="700">JUL</text>
          <text x="16" y="28" font-size="18" fill="#3c3c3c" text-anchor="middle" font-family="Liberation Sans, sans-serif">17</text>
        </symbol>
        <symbol id="passport" viewBox="0 0 32 32">
          <rect width="32" height="32" rx="5" fill="url(#blueTile)" />
          <g fill="#fff">
            <path d="M17 6h7l-1 3h-5zM17.500 10h5v2q-1 2-2.500 2t-2.500-2zM22 14h2v7h-6v-2l-3 1-6-5 1-2 5 3zM18 22h6v4h-8v-2h2z" />
            <path d="M7 8q4-3 5 2v4q-4 0-5-4z" fill-opacity="0.850" />
          </g>
        </symbol>
        <symbol id="worldmap" viewBox="0 0 32 28">
          <path d="M0 1l9-1 7 1 8-1 8 1v27H0z" fill="#8b6a44" />
          <path d="M1 2l8-1 7 1 8-1 7 1v24H1z" fill="#58c4f6" />
          <path d="M9 1l7 1v24l-7-1zM24 1l7 1v24l-7-1z" fill="#9be0fb" />
          <path d="M4 4h8l-1 4-3 2 3 3v4l-2 4-2-6-2-4zM17 5l10-1 2 3-3 4-2-1-2 5-2 3-2-6-2-3z" fill="#5a9a2e" />
          <path d="M17 10l4 1-1 5-2-2z" fill="#dcc22e" />
          <path d="M25 16l4-1 1 4-3 1z" fill="#e6a13c" />
          <path d="M1 24h30v3H1z" fill="#eef5f5" />
        </symbol>
      </defs>
    </svg>

    <header class="bar">
      <button class="icon-button" type="button" aria-label="Menu">
        <svg viewBox="0 0 24 24"><path d="M3 6h18v2H3V6m0 5h18v2H3v-2m0 5h18v2H3v-2z" /></svg>
      </button>
      <svg class="logo" viewBox="0 0 64 64" aria-hidden="true">
        <circle cx="32" cy="32" r="32" fill="#fff" />
        <path d="M24 24L47 16L40 40L17 48Z" fill="#fff" stroke="#4b38da" stroke-width="8" stroke-linejoin="round" />
        <path d="M27.500 27L41.500 22.500L37 37L22.500 42Z" fill="#fff" />
      </svg>
      <a class="brand" href="#">NOMAD VISA</a>
      <nav class="actions">
        <a class="login" href="#">LOGIN</a>
        <button class="icon-button" type="button" aria-label="Share">
          <svg viewBox="0 0 24 24"><path d="M18 16.080C17.240 16.080 16.560 16.380 16.040 16.850L8.910 12.700C8.960 12.470 9 12.240 9 12S8.960 11.530 8.910 11.300L15.960 7.190C16.500 7.690 17.210 8 18 8A3 3 0 0 0 21 5 3 3 0 0 0 18 2 3 3 0 0 0 15 5C15 5.240 15.040 5.470 15.090 5.700L8.040 9.810C7.500 9.310 6.790 9 6 9A3 3 0 0 0 3 12 3 3 0 0 0 6 15C6.790 15 7.500 14.690 8.040 14.190L15.160 18.340C15.110 18.550 15.080 18.770 15.080 19 15.080 20.610 16.390 21.910 18 21.910S20.920 20.610 20.920 19A2.920 2.920 0 0 0 18 16.080Z" /></svg>
        </button>
        <button class="icon-button" type="button" aria-label="Temperature in Celsius">
          <svg viewBox="0 0 24 24"><path d="M16.500 5C18.050 5 19.500 5.470 20.690 6.280L19.530 9.170C18.730 8.440 17.670 8 16.500 8 14 8 12 10 12 12.500S14 17 16.500 17C17.530 17 18.470 16.660 19.230 16.080L20.370 18.930C19.240 19.610 17.920 20 16.500 20A7.500 7.500 0 0 1 9 12.500 7.500 7.500 0 0 1 16.500 5M6 3A3 3 0 0 1 9 6 3 3 0 0 1 6 9 3 3 0 0 1 3 6 3 3 0 0 1 6 3M6 5A1 1 0 0 0 5 6 1 1 0 0 0 6 7 1 1 0 0 0 7 6 1 1 0 0 0 6 5Z" /></svg>
        </button>
        <button class="icon-button" type="button" aria-label="Dark mode">
          <svg viewBox="0 0 24 24"><path d="M2 12A10 10 0 0 0 15 21.540 10 10 0 0 1 15 2.460 10 10 0 0 0 2 12Z" /></svg>
        </button>
      </nav>
    </header>

    <main class="page">
      <form class="search" @submit.prevent>
        <div class="field">
          <label for="origin">Select your origin</label>
          <select id="origin" v-model="origin">
            <option>Germany</option>
          </select>
          <svg class="flag" viewBox="0 0 28 22" aria-hidden="true">
            <path d="M0 2Q7 4 14 2T28 1V8Q21 6 14 8T0 9Z" fill="#1a1a1a" />
            <path d="M0 8Q7 10 14 8T28 7V14Q21 12 14 14T0 15Z" fill="#f01a1a" />
            <path d="M0 14Q7 16 14 14T28 13V20Q21 18 14 20T0 21Z" fill="#f4c514" />
          </svg>
          <svg class="caret" viewBox="0 0 20 10" aria-hidden="true"><path d="M0 0h20L10 10z" fill="#fff" /></svg>
        </div>
        <button class="go" type="submit">GO</button>
      </form>

      <div class="columns updated">
        <p>Data updated: Jul 9, 2021</p>
      </div>

      <div class="columns">
        <aside class="panel">
          <h2>
            <svg class="emoji-large" viewBox="0 0 40 40" aria-hidden="true">
              <path d="M15 24L3 37" stroke="#4c5560" stroke-width="7" stroke-linecap="round" />
              <path d="M14 24L3 36" stroke="#0d0f12" stroke-width="5" stroke-linecap="round" />
              <ellipse cx="25" cy="14" rx="13" ry="13" fill="#cfd0d2" stroke="#8d9299" stroke-width="2" />
              <path d="M16 10q5-8 13-6" fill="none" stroke="#eef0f2" stroke-width="2" />
            </svg>
            <span class="title-text">Filter - Tourist Visas</span>
            <svg class="emoji-large" viewBox="0 0 40 40" aria-hidden="true">
              <path d="M1 14l4 1 5 5 7-1-9-8 6 1 13 6q9-4 12-1-2 4-12 6L10 26q-5 1-7-3z" fill="#7fa6ee" />
              <path d="M8 10l8 1 11 6-8 2zM1 14l4 1 4 5-5-1z" fill="#1d2a4f" />
              <path d="M20 19l8-1-6 9-4 1z" fill="#2f4f9e" />
              <path d="M10 24l14-2-10 4-5 1z" fill="#dfe8f8" />
              <path d="M0 34h22l3 5H0z" fill="#777" />
              <path d="M16 34h6l2 4h-8z" fill="#ddd" />
            </svg>
          </h2>

          <h3><svg class="emoji"><use href="#worldmap" /></svg>Map</h3>
          <div class="chips">
            <button class="chip" :class="{ active: mapMode === 'visa' }" type="button" @click="mapMode = 'visa'">
              <svg class="emoji-small"><use href="#passport" /></svg>Visa Type
            </button>
            <button class="chip" :class="{ active: mapMode === 'duration' }" type="button" @click="mapMode = 'duration'">
              <svg class="emoji-small"><use href="#calendar" /></svg>Duration Group
            </button>
          </div>

          <h3><svg class="emoji"><use href="#calendar" /></svg>Duration Group</h3>
          <div class="chips">
            <button v-for="name in durations" :key="name" class="chip" type="button">{{ name }}</button>
          </div>

          <h3><svg class="emoji"><use href="#passport" /></svg>Visa Type</h3>
          <div class="chips">
            <button v-for="type in visaTypes" :key="type.name" class="chip solid" :class="type.status" type="button">
              {{ type.name }}
            </button>
          </div>
        </aside>

        <section class="results">
          <div class="map">
            <svg class="world" viewBox="1304 556 1512 1048" role="img" aria-label="World map of visa requirements">
              <path v-for="(shape, i) in land" :key="i" :class="['area', shape.status]" :d="shape.d" />
              <path v-for="(shape, i) in inner" :key="`b${i}`" :class="['border', shape.status]" :d="shape.d" />
              <path class="area sea" :d="trace('F 122,278 142,276 146,296 122,298', true)" />
              <text v-for="label in labels" :key="label.x" :class="['place', { ocean: label.ocean }]">
                <tspan v-for="(line, n) in label.lines" :key="line" :x="label.x" :y="label.y + n * (label.ocean ? 30 : 33)">{{ line }}</tspan>
              </text>
            </svg>
            <div class="zoom">
              <button type="button" aria-label="Zoom in">
                <svg viewBox="0 0 26 26"><path d="M0 13h26M13 0v26" stroke="#464646" stroke-width="5" /></svg>
              </button>
              <button type="button" aria-label="Zoom out" disabled>
                <svg viewBox="0 0 26 26"><path d="M4 13h18" stroke="#bbb" stroke-width="5" /></svg>
              </button>
            </div>
            <p class="credit"><a href="#">Leaflet</a> | ©CartoDB</p>
          </div>
          <p class="found">223 Countries found</p>
          <div class="list"></div>
        </section>
      </div>
    </main>
  </div>
</template>

<style>
body {
  margin: 0;
  background: #1e1e1e;
}
</style>

<style scoped>
.app {
  height: 100vh;
  overflow: hidden;
  color: #fff;
  background: #1e1e1e;
  font-family: 'Liberation Sans', Arial, sans-serif;
  font-size: 28px;
}

.defs {
  position: absolute;
}

button,
select {
  font: inherit;
  color: inherit;
  cursor: pointer;
}

a {
  color: inherit;
  text-decoration: none;
}

h2,
h3,
p {
  margin: 0;
}

.bar {
  display: flex;
  align-items: center;
  box-sizing: border-box;
  height: 94px;
  padding: 2px 40px 0 18px;
  background: #4b38da;
}

.icon-button {
  width: 48px;
  height: 48px;
  padding: 0;
  border: 0;
  background: none;
}

.icon-button svg {
  display: block;
  fill: #fff;
}

.logo {
  width: 64px;
  height: 64px;
  margin: 0 33px 0 64px;
}

.brand {
  font-weight: 700;
  letter-spacing: 1px;
}

.actions {
  display: flex;
  align-items: center;
  gap: 48px;
  margin-left: auto;
}

.login {
  font-size: 23px;
  letter-spacing: 2px;
}

.page {
  padding: 160px 52px 0 48px;
}

.search,
.columns {
  max-width: 2314px;
  margin: 0 auto;
}

.search {
  display: flex;
  justify-content: center;
  align-items: flex-start;
  gap: 48px;
  box-sizing: border-box;
  padding-right: 186px;
}

.field {
  position: relative;
  width: 544px;
}

.field label {
  position: absolute;
  top: -14px;
  left: 18px;
  padding: 0 6px;
  background: #1e1e1e;
  color: #bbb;
  font-size: 24px;
  line-height: 28px;
}

.field select {
  display: block;
  box-sizing: border-box;
  width: 100%;
  height: 112px;
  padding: 0 24px 8px 22px;
  border: 2px solid #565656;
  border-radius: 8px;
  appearance: none;
  background: none;
  font-size: 31px;
}

.flag {
  position: absolute;
  top: 40px;
  left: 170px;
  width: 28px;
  height: 22px;
}

.caret {
  position: absolute;
  top: 54px;
  right: 38px;
  width: 20px;
  height: 10px;
}

.go {
  width: 156px;
  height: 88px;
  margin-top: 8px;
  padding: 0 0 4px 2px;
  border: 0;
  border-radius: 8px;
  background: #4b38da;
  box-shadow: 0 4px 8px rgba(0, 0, 0, 0.4);
  font-size: 26px;
  letter-spacing: 2px;
}

.columns {
  display: grid;
  grid-template-columns: 742fr 1516fr;
  align-items: start;
  column-gap: 56px;
}

.updated {
  margin-top: 56px;
  margin-bottom: 92px;
}

.updated p {
  grid-column: 2;
  color: #bbb;
  line-height: 40px;
}

.panel {
  min-width: 0;
  padding: 30px 32px 80px;
  border: 2px solid #393939;
  border-radius: 16px;
}

h2 {
  display: flex;
  align-items: center;
  font-size: 38px;
  line-height: 60px;
}

.title-text {
  margin: 0 12px 0 14px;
}

h3 {
  display: flex;
  align-items: center;
  gap: 8px;
  margin-bottom: 54px;
  font-size: 31px;
  line-height: 40px;
}

h2 + h3 {
  margin-top: 72px;
}

.chips + h3 {
  margin-top: 82px;
}

.emoji-large {
  width: 40px;
  height: 40px;
}

.emoji {
  width: 32px;
  height: 32px;
}

.emoji-small {
  width: 28px;
  height: 28px;
}

.chips {
  display: flex;
  flex-wrap: wrap;
  gap: 16px;
}

.chip {
  display: flex;
  align-items: center;
  gap: 8px;
  height: 64px;
  padding: 0 23px 8px;
  border: 2px solid #393939;
  border-radius: 8px;
  background: none;
}

.chip.active {
  background: #2a2a2a;
  color: #b4b4b4;
}

.chip.active svg {
  opacity: 0.75;
}

.chip.solid {
  padding: 0 24px 6px;
  border: 0;
  color: rgba(0, 0, 0, 0.8);
}

.free {
  --tone: #68ae5c;
  --fill: #43663d;
}

.required {
  --tone: #f29d38;
  --fill: #885e2b;
}

.evisa {
  --tone: #f7c344;
  --fill: #8a7131;
}

.movement {
  --tone: #4450b0;
  --fill: #313767;
}

.arrival {
  --tone: #429587;
  --fill: #305953;
}

.waiver {
  --tone: #98c25d;
  --fill: #5b703d;
}

.none {
  --tone: #4c4c4c;
  --fill: #2b2b2b;
}

.sea {
  --tone: #f29d38;
  --fill: #1e1e1e;
}

.chip.solid {
  background: var(--tone);
}

.results {
  min-width: 0;
}

.map {
  position: relative;
  overflow: hidden;
  border: 2px solid #393939;
  border-radius: 16px;
}

.world {
  display: block;
  width: 100%;
}

.area {
  fill: var(--fill);
  stroke: var(--tone);
  stroke-width: 2px;
  stroke-linejoin: round;
}

.border {
  fill: none;
  stroke: var(--tone);
  stroke-width: 2px;
}

.place {
  fill: #636363;
  stroke: rgba(45, 45, 45, 0.7);
  stroke-width: 4px;
  paint-order: stroke;
  font-family: Inter, 'Liberation Sans', sans-serif;
  font-size: 29px;
  font-weight: 700;
  text-anchor: middle;
}

.place.ocean {
  fill: #505050;
  font-size: 28px;
  font-style: italic;
  letter-spacing: 2px;
}

.zoom {
  position: absolute;
  top: 24px;
  right: 24px;
  display: flex;
  flex-direction: column;
  width: 60px;
  overflow: hidden;
  border-radius: 4px;
  box-shadow: 0 2px 10px rgba(0, 0, 0, 0.65);
}

.zoom button {
  display: grid;
  place-items: center;
  height: 60px;
  padding: 8px 0 0;
  border: 0;
  background: #fff;
}

.zoom button:disabled {
  padding: 2px 0 0;
  border-top: 2px solid #ccc;
  background: #f4f4f4;
}

.zoom svg {
  width: 26px;
  height: 26px;
}

.credit {
  position: absolute;
  right: 12px;
  bottom: 2px;
  color: #484848;
  font-size: 22px;
  line-height: 26px;
}

.found {
  padding: 28px 0 36px;
  color: #bbb;
  font-size: 26px;
  line-height: 40px;
  text-align: center;
}

.list {
  height: 80px;
  border: 2px solid #393939;
  border-radius: 16px;
}
</style>
